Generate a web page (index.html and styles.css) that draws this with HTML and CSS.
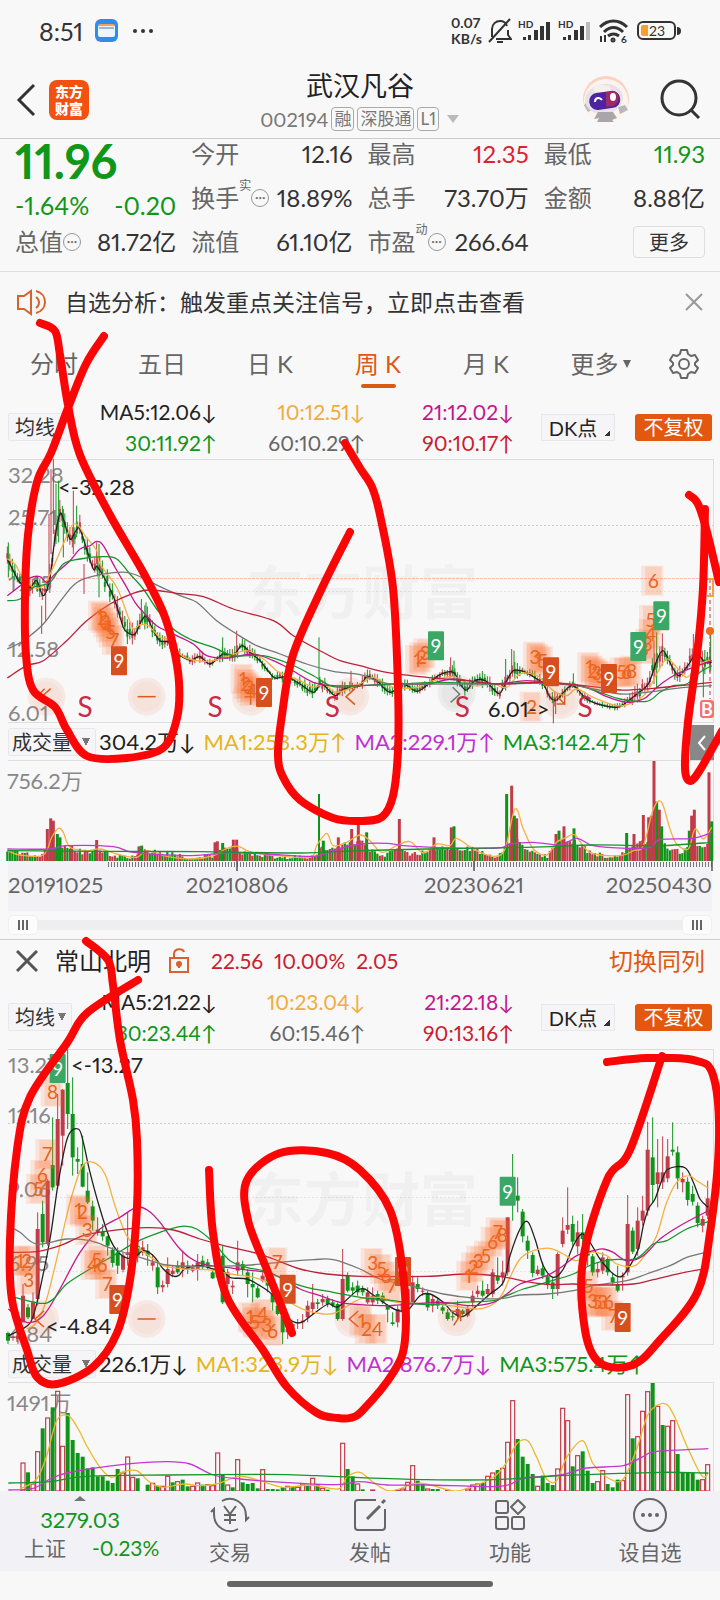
FILE: index.html
```html
<!DOCTYPE html>
<html lang="zh-CN">
<head>
    <meta charset="UTF-8">
    <meta name="viewport" content="width=device-width, initial-scale=1.0">
    <title>武汉凡谷 002194</title>
    <link rel="stylesheet" href="styles.css">
</head>
<body>

<div class="status-bar">
    <span class="clock">8:51</span>
    <svg class="app-dot" width="24" height="24" viewBox="0 0 24 24">
        <rect width="23" height="23" rx="6" fill="#2f8bee"/>
        <rect x="3" y="6" width="17" height="12" rx="2" fill="#eef5fd"/>
        <path d="M3 7q0-2 2-2h13q2 0 2 2z" fill="#f3a253"/>
        <path d="M4 9h15" stroke="#5373a8" stroke-width="1"/>
    </svg>
    <svg width="24" height="24" viewBox="0 0 24 24" fill="#333"><circle cx="4" cy="12" r="2"/><circle cx="12" cy="12" r="2"/><circle cx="20" cy="12" r="2"/></svg>
    <div class="status-right">
        <span class="net-speed">0.07<br>KB/s</span>
        <svg width="24" height="26" viewBox="0 0 24 26" fill="none" stroke="#333" stroke-width="2">
            <path d="M4 19V11c0-5 4-8 8-8 3 0 6 2 7 5M20 12v5l3 4H8M22 1L1 24M9 24h6"/>
        </svg>
        <svg width="34" height="24" viewBox="0 0 34 24" fill="#333">
            <text class="hd" x="0" y="9">HD</text>
            <path d="M5 18h3v3H5zM10 16h3v5h-3zM16 11h4v10h-4zM22 7h4v14h-4zM28 3h4v18h-4z"/>
        </svg>
        <svg width="34" height="24" viewBox="0 0 34 24" fill="#333">
            <text class="hd" x="0" y="9">HD</text>
            <path d="M5 18h3v3H5zM10 16h3v5h-3zM16 11h4v10h-4zM22 7h4v14h-4z"/><path d="M28 3h4v18h-4z" fill="#bbb"/>
        </svg>
        <svg width="32" height="26" viewBox="0 0 32 26" fill="none" stroke="#333" stroke-width="3">
            <path d="M2 9c8-8 19-8 27 0M6 14c6-6 13-6 19 0M10 18c4-3 7-3 11 0"/>
            <path d="M3 24v-6M7 17v7" stroke-width="2"/><circle cx="15" cy="22" r="1" />
            <text class="hd" x="23" y="25" fill="#333" stroke="none">6</text>
        </svg>
        <svg width="46" height="22" viewBox="0 0 46 22">
            <rect x="2" y="2" width="37" height="17" rx="5" fill="none" stroke="#333" stroke-width="2"/>
            <path d="M5 7q0-2 2-2h5v11H7q-2 0-2-2z" fill="#f7a02c"/>
            <path d="M41 7q4 0 4 4t-4 4z" fill="#333"/>
            <text class="battery-text" x="13" y="16">23</text>
        </svg>
    </div>
</div>

<header class="header">
    <div class="header-left">
        <button class="icon-btn" aria-label="返回">
            <svg width="22" height="34" viewBox="0 0 22 34" fill="none" stroke="#333" stroke-width="3"><path d="M18 2L3 17l15 15"/></svg>
        </button>
        <a class="logo" href="#">东方<br>财富</a>
    </div>
    <div class="header-title">
        <h1>武汉凡谷</h1>
        <button class="code">002194 <span class="tag">融</span><span class="tag">深股通</span><span class="tag">L1</span>
            <svg width="14" height="10" viewBox="0 0 14 10" fill="#bbb"><path d="M1 1h12L7 9z"/></svg>
        </button>
    </div>
    <div class="header-right">
        <button class="icon-btn" aria-label="助手">
            <svg width="50" height="50" viewBox="0 0 50 50">
                <circle cx="26" cy="24" r="23" fill="#fbd3c2"/>
                <circle cx="26" cy="26" r="22" fill="#fdf3ef"/>
                <path d="M4 30l6-6 4 10-6 3zM38 32l7-2 3 5-8 4z" fill="#b9b7bb"/>
                <ellipse cx="24" cy="24" rx="19" ry="15" fill="#e6e2e6" transform="rotate(-10 24 24)"/>
                <ellipse cx="22" cy="14" rx="9" ry="4" fill="#f7f0ea"/>
                <path d="M18 37h15l4 6-5 2 2 2H17l2-4-5 1z" fill="#aaa5a8"/>
                <rect x="9" y="17" width="31" height="17" rx="8" fill="#4d23a1" transform="rotate(-8 24 24)"/>
                <path d="M26 17l7-1c7 1 8 12 0 15l-7 1z" fill="#a02a63"/>
                <path d="M15 27c0-5 5-5 7-2" fill="none" stroke="#fff" stroke-width="2"/>
                <ellipse cx="33" cy="22" rx="3" ry="4" fill="#fff"/>
            </svg>
        </button>
        <button class="icon-btn" aria-label="搜索">
            <svg width="42" height="42" viewBox="0 0 42 42" fill="none" stroke="#333" stroke-width="3"><circle cx="19" cy="19" r="17"/><path d="M31 31l8 8"/></svg>
        </button>
    </div>
</header>

<section class="quote">
    <div class="quote-col quote-main">
        <strong class="price">11.96</strong>
        <div class="cell change green"><span>-1.64%</span><span>-0.20</span></div>
        <div class="cell"><span class="lbl">总值<i class="dots">•••</i></span><b>81.72亿</b></div>
    </div>
    <div class="quote-col">
        <div class="cell"><span class="lbl">今开</span><b>12.16</b></div>
        <div class="cell"><span class="lbl">换手<sup>实</sup><i class="dots">•••</i></span><b>18.89%</b></div>
        <div class="cell"><span class="lbl">流值</span><b>61.10亿</b></div>
    </div>
    <div class="quote-col">
        <div class="cell"><span class="lbl">最高</span><b class="red">12.35</b></div>
        <div class="cell"><span class="lbl">总手</span><b>73.70万</b></div>
        <div class="cell"><span class="lbl">市盈<sup>动</sup><i class="dots">•••</i></span><b>266.64</b></div>
    </div>
    <div class="quote-col">
        <div class="cell"><span class="lbl">最低</span><b class="green">11.93</b></div>
        <div class="cell"><span class="lbl">金额</span><b>8.88亿</b></div>
        <div class="cell cell-end"><button class="more-btn">更多</button></div>
    </div>
</section>

<div class="notice">
    <svg width="32" height="28" viewBox="0 0 32 28" fill="none" stroke="#d9622c" stroke-width="2">
        <path d="M2 8h6l7-5v23l-7-5H2zM20 9c4 3 4 8 0 11M20 3c12 3 12 19 0 22"/>
    </svg>
    <a href="#">自选分析：触发重点关注信号，立即点击查看</a>
    <button class="icon-btn" aria-label="关闭">
        <svg width="18" height="18" viewBox="0 0 18 18" stroke="#999" stroke-width="2"><path d="M1 1l16 16M17 1L1 17"/></svg>
    </button>
</div>

<nav class="tabs">
    <button>分时</button>
    <button>五日</button>
    <button>日 K</button>
    <button class="active">周 K</button>
    <button>月 K</button>
    <button class="tab-more">更多<svg width="8" height="8" viewBox="0 0 8 8" fill="#666"><path d="M0 0h8L4 8z"/></svg></button>
    <button class="gear" aria-label="设置">
        <svg width="30" height="30" viewBox="0 0 30 30" fill="none" stroke="#666" stroke-width="2" stroke-linejoin="round">
            <path d="M12 1h6l1 4 3 2 4-1 3 5-3 3v2l3 3-3 5-4-1-3 2-1 4h-6l-1-4-3-2-4 1-3-5 3-3v-2l-3-3 3-5 4 1 3-2z"/><circle cx="15" cy="15" r="5"/>
        </svg>
    </button>
</nav>

<main>
    <section class="stock">
        <div class="ma-row">
            <select class="pick" aria-label="指标"><option>均线</option></select>
            <div class="ma"><span class="c-black">MA5:12.06↓</span><span class="c-green">30:11.92↑</span></div>
            <div class="ma"><span class="c-yellow">10:12.51↓</span><span class="c-gray">60:10.29↑</span></div>
            <div class="ma"><span class="c-pink">21:12.02↓</span><span class="c-red">90:10.17↑</span></div>
            <div class="ma-btns"><button class="dk">DK点</button><button class="adj">不复权</button></div>
        </div>
        <svg class="chart" id="price1" viewBox="0 0 720 264"></svg>
        <div class="vol-row">
            <select class="pick pick-vol" aria-label="副图指标"><option>成交量</option></select>
            <span class="c-black">304.2万↓</span>
            <span class="c-yellow2">MA1:253.3万↑</span>
            <span class="c-purple">MA2:229.1万↑</span>
            <span class="c-green">MA3:142.4万↑</span>
            <button class="side-btn" aria-label="展开"><svg width="10" height="16" viewBox="0 0 10 16" fill="none" stroke="#fff" stroke-width="2"><path d="M8 1L2 8l6 7"/></svg></button>
        </div>
        <svg class="chart" id="vol1" viewBox="0 0 720 101"></svg>
        <div class="dates">
            <span>20191025</span><span>20210806</span><span>20230621</span><span>20250430</span>
        </div>
        <div class="range">
            <input type="range" min="0" max="100" value="0" aria-label="起始">
            <input type="range" min="0" max="100" value="100" aria-label="结束">
        </div>
    </section>

    <section class="stock stock-second">
        <div class="stock-head">
            <button class="icon-btn" aria-label="移除"><svg width="22" height="22" viewBox="0 0 22 22" stroke="#555" stroke-width="3"><path d="M1 1l20 20M21 1L1 21"/></svg></button>
            <h2>常山北明</h2>
            <button class="icon-btn lock" aria-label="锁定">
                <svg width="20" height="26" viewBox="0 0 20 26" fill="none" stroke="#d9622c" stroke-width="2"><path d="M1 10h18v14H1zM5 10V6c0-6 9-6 10-2"/><circle cx="10" cy="16" r="2" fill="#d9622c"/><path d="M10 16v4"/></svg>
            </button>
            <span class="red">22.56</span><span class="red">10.00%</span><span class="red">2.05</span>
            <a href="#" class="switch">切换同列</a>
        </div>
        <div class="ma-row">
            <select class="pick" aria-label="指标"><option>均线</option></select>
            <div class="ma"><span class="c-black">MA5:21.22↓</span><span class="c-green">30:23.44↑</span></div>
            <div class="ma"><span class="c-yellow">10:23.04↓</span><span class="c-gray">60:15.46↑</span></div>
            <div class="ma"><span class="c-pink">21:22.18↓</span><span class="c-red">90:13.16↑</span></div>
            <div class="ma-btns"><button class="dk">DK点</button><button class="adj">不复权</button></div>
        </div>
        <svg class="chart" id="price2" viewBox="0 0 720 296"></svg>
        <div class="vol-row">
            <select class="pick pick-vol" aria-label="副图指标"><option>成交量</option></select>
            <span class="c-black">226.1万↓</span>
            <span class="c-yellow2">MA1:323.9万↓</span>
            <span class="c-purple">MA2:876.7万↓</span>
            <span class="c-green">MA3:575.4万↑</span>
        </div>
        <svg class="chart" id="vol2" viewBox="0 0 720 109"></svg>
    </section>
</main>

<footer class="bottom-nav">
    <a href="#" class="index">
        <svg width="12" height="5" viewBox="0 0 12 5" fill="#777"><path d="M6 0l6 5H0z"/></svg>
        <span class="green">3279.03</span>
        <span class="index-row"><span>上证</span><span class="green">-0.23%</span></span>
    </a>
    <a href="#">
        <svg width="40" height="36" viewBox="0 0 40 36" fill="none" stroke="#666" stroke-width="2">
            <path d="M12 4c10-6 24 1 24 15v4l3-3M28 32C18 38 4 31 4 17v-5l-3 3"/><path d="M14 9l6 8 6-8M20 17v10M14 18h12M14 23h12"/>
        </svg>
        <span>交易</span>
    </a>
    <a href="#">
        <svg width="36" height="36" viewBox="0 0 36 36" fill="none" stroke="#666" stroke-width="2">
            <path d="M24 3H6q-3 0-3 3v24q0 3 3 3h24q3 0 3-3V12"/><path d="M15 22L28 9M30 6l3-3" stroke-width="3"/>
        </svg>
        <span>发帖</span>
    </a>
    <a href="#">
        <svg width="36" height="36" viewBox="0 0 36 36" fill="none" stroke="#666" stroke-width="2">
            <rect x="4" y="4" width="12" height="12" rx="2"/><rect x="4" y="20" width="12" height="12" rx="2"/><rect x="20" y="20" width="12" height="12" rx="2"/><path d="M26 3l7 7-7 7-7-7z" stroke-linejoin="round"/>
        </svg>
        <span>功能</span>
    </a>
    <a href="#">
        <svg width="36" height="36" viewBox="0 0 36 36" fill="none" stroke="#666" stroke-width="2">
            <circle cx="18" cy="18" r="16"/><g fill="#666" stroke="none"><circle cx="11" cy="18" r="2"/><circle cx="18" cy="18" r="2"/><circle cx="25" cy="18" r="2"/></g>
        </svg>
        <span>设自选</span>
    </a>
</footer>
<div class="home-bar"></div>

<svg class="marks" id="marks" viewBox="0 0 720 1600"></svg>

<script src="charts.js"></script>
</body>
</html>
```
FILE: styles.css
```css
* { box-sizing: border-box; }
body {
    position: relative;
    margin: 0;
    background: #f9f8f9;
    color: #333;
    font-family: Lato, "Noto Sans CJK SC", sans-serif;
    font-size: 24px;
    line-height: 30px;
    font-variant-numeric: proportional-nums;
    overflow-x: hidden;
}
button, select, input { font: inherit; color: inherit; margin: 0; }
button { background: none; border: none; padding: 0; cursor: pointer; }
a { color: inherit; text-decoration: none; }
h1, h2 { margin: 0; font-weight: normal; }
svg { display: block; flex: none; }
.icon-btn { display: flex; }

.red, .c-red { color: #c9202e; }
.green, .c-green { color: #109618; }
.c-black { color: #222; }
.c-yellow { color: #f0ac3c; }
.c-yellow2 { color: #e6b422; }
.c-gray { color: #666; }
.c-pink { color: #c4168c; }
.c-purple { color: #c030d0; }

/* 状态栏 */
.status-bar { display: flex; align-items: center; gap: 12px; height: 62px; padding: 0 38px 0 39px; }
.clock { font-size: 25px; }
.status-right { display: flex; align-items: center; gap: 6px; margin-left: auto; }
.net-speed { font-size: 14px; line-height: 16px; font-weight: bold; }
.hd { font-size: 10px; font-weight: bold; }
.battery-text { font-size: 14px; fill: #333; }

/* 标题 */
.header { display: grid; grid-template-columns: 1fr auto 1fr; align-items: center; height: 77px; padding: 0 16px; border-bottom: 1px solid #ccc; }
.header-left { display: flex; align-items: center; gap: 11px; }
.logo { width: 40px; height: 40px; padding-top: 3px; border-radius: 8px; background: #f4500f; color: #fff; font-size: 14px; line-height: 17px; font-weight: 900; text-align: center; }
.header-title { padding-bottom: 3px; text-align: center; }
.header-title h1 { font-size: 27px; line-height: 40px; color: #222; }
.code { display: flex; align-items: center; gap: 3px; height: 26px; color: #777; font-size: 20px; line-height: 22px; }
.tag { padding: 0 2px; border: 1px solid #aaa; border-radius: 4px; font-size: 17px; }
.code svg { margin-left: 4px; }
.header-right { display: flex; align-items: center; justify-content: flex-end; gap: 30px; padding-right: 2px; }

/* 行情 */
.quote { display: grid; grid-template-columns: repeat(4, 1fr); gap: 15px; height: 133px; padding: 0 15px; border-bottom: 1px solid #ddd; }
.quote-col { display: flex; flex-direction: column; }
.cell { display: flex; justify-content: space-between; align-items: center; height: 44px; margin-top: -7px; margin-bottom: 7px; white-space: nowrap; }
.cell b { font-weight: normal; }
.cell .red { color: #e0202e; }
.cell .green { color: #109618; }
.lbl { display: flex; align-items: center; color: #666; }
.lbl sup { align-self: flex-start; font-size: 12px; line-height: 12px; margin-top: -3px; }
.dots { width: 18px; height: 18px; border: 1px solid #999; border-radius: 50%; font-size: 6px; line-height: 16px; font-style: normal; text-align: center; color: #777; }
.price { height: 44px; font-size: 47px; line-height: 45px; color: #109618; }
.change { font-size: 25px; }
.quote-main .change { margin-top: 0; margin-bottom: 0; }
.cell-end { justify-content: flex-end; }
.more-btn { width: 72px; height: 32px; border: 1px solid #ddd; border-radius: 4px; font-size: 20px; line-height: 28px; }

/* 提示 */
.notice { display: flex; align-items: center; height: 60px; padding: 0 17px 0 16px; gap: 17px; font-size: 23px; }
.notice .icon-btn { margin-left: auto; }

/* 周期 */
.tabs { display: grid; grid-template-columns: repeat(6, 108fr) 72fr; height: 63px; color: #666; }
.tabs button { position: relative; display: flex; align-items: center; justify-content: center; gap: 4px; }
.tabs .tab-more { padding-left: 13px; }
.tabs .active { color: #dd5a14; }
.tabs .active::after { content: ""; position: absolute; bottom: 7px; width: 35px; height: 4px; border-radius: 2px; background: #dd5a14; }

/* 均线 */
.ma-row { display: grid; grid-template-columns: 60px repeat(3, 1fr) 198px; align-items: center; height: 64px; padding: 0 8px; font-size: 21px; line-height: 31px; }
.ma { display: flex; flex-direction: column; align-items: flex-end; white-space: nowrap; }
.pick { appearance: none; width: 64px; height: 28px; padding: 0 6px; border: 1px solid #e8e8ec; border-radius: 2px; font-size: 20px; line-height: 24px; color: #333;
    background: #f5f5f7 conic-gradient(from -26deg at 50% 100%, #777 0 52deg, transparent 0) no-repeat right 5px center / 8px 8px; }
.ma-btns { display: flex; justify-content: space-between; padding-left: 27px; font-size: 20px; line-height: 26px; }
.dk { width: 74px; height: 27px; padding-right: 10px; border: 1px solid #e8e8ec; color: #222;
    background: linear-gradient(135deg, transparent 50%, #333 50%) no-repeat right 4px bottom 4px / 6px 6px #f5f5f7; }
.adj { width: 77px; height: 27px; border-radius: 3px; background: #e3570f; color: #fff; }

.chart { width: 100%; height: auto; overflow: visible; }
.chart text { font-size: 22px; }
.chart .num { font-size: 19px; text-anchor: middle; }
.chart .sig { font-size: 28px; fill: #c92a45; text-anchor: middle; }
.chart .buy { font-size: 18px; fill: #fff; font-weight: bold; }
.chart .wm { font-size: 58px; font-weight: bold; fill: #000; fill-opacity: .03; text-anchor: middle; }

.vol-row { position: relative; display: flex; align-items: center; gap: 8px; height: 37px; padding: 0 8px; font-size: 22px; white-space: nowrap; }
.pick-vol { width: 88px; margin-right: -5px; padding: 0 3px; }
.side-btn { position: absolute; right: 6px; top: 2px; width: 24px; height: 35px; display: flex; align-items: center; justify-content: center; background: #888; }

.dates { display: grid; grid-template-columns: 118fr 222fr 252fr 112fr; height: 50px; margin: 0 8px; padding: 9px 0; background: #f2f2f6; color: #666; font-size: 22px; text-align: center; }
.dates span:first-child { text-align: left; }
.dates span:last-child { text-align: right; }
.range { display: grid; align-items: center; height: 28px; margin: 0 8px; background: linear-gradient(#eeeef0, #eeeef0) no-repeat center / 100% 10px; }
.range input { grid-area: 1 / 1; appearance: none; width: 100%; height: 20px; background: none; pointer-events: none; }
.range input::-webkit-slider-thumb { appearance: none; pointer-events: auto; width: 30px; height: 20px; border: 1px solid #f0f0f0; border-radius: 5px;
    background: repeating-linear-gradient(90deg, #666 0 2px, transparent 2px 4px) no-repeat center / 10px 10px #fcfcfc; }

/* 第二只股票 */
.stock-second { border-top: 1px solid #ccc; }
.stock-head { display: flex; align-items: center; gap: 11px; height: 45px; padding: 0 15px 3px 16px; font-size: 22px; }
.stock-head h2 { margin: 0 7px 0 6px; font-size: 24px; color: #222; }
.lock { margin-right: 11px; }
.stock-head .red { font-size: 21px; }
.switch { margin-left: auto; font-size: 24px; color: #dd5a14; }

/* 底部导航 */
.bottom-nav { position: relative; display: grid; grid-template-columns: 160fr repeat(4, 140fr); height: 80px; background: #f2f2f6; color: #666; font-size: 21px; line-height: 28px; }
.bottom-nav a { display: flex; flex-direction: column; align-items: center; gap: 10px; padding-top: 6px; line-height: 18px; }
.bottom-nav .index { gap: 0; padding-top: 5px; font-size: 22px; line-height: 28px; }
.index svg { margin-bottom: 5px; }
.index-row { display: flex; gap: 26px; padding-left: 24px; align-self: flex-start; font-size: 21px; }
.home-bar { width: 37%; height: 6px; margin: 10px auto 13px; border-radius: 3px; background: #666; }

.marks { position: absolute; top: 0; left: 0; width: 100%; height: auto; pointer-events: none; fill: none; stroke: #fb0606; stroke-width: 8; stroke-linecap: round; stroke-linejoin: round; }
```
FILE: charts.js
```js
// 数据按 1/3 像素记录，左半屏与右半屏各一组，右半组的 x 从 1080 开始
const HALF = 1080;
const RED = "#c03c48", GREEN = "#0f9318";
const INK = { black: "#222", yellow: "#f5b041", pink: "#c4168c", green: "#14962a", gray: "#777", red: "#bd2038", purple: "#c437d2" };

function join(left, right) {
    return left.concat(right.map(p => [p[0] + HALF, ...p.slice(1)]));
}

// 平滑曲线
function smooth(p) {
    let d = `M${p[0][0].toFixed(1)} ${p[0][1].toFixed(1)}`;
    for (let i = 0; i < p.length - 1; i++) {
        const a = p[i - 1] || p[i], b = p[i], c = p[i + 1], e = p[i + 2] || c;
        d += `C${(b[0] + (c[0] - a[0]) / 6).toFixed(1)} ${(b[1] + (c[1] - a[1]) / 6).toFixed(1)} ` +
             `${(c[0] - (e[0] - b[0]) / 6).toFixed(1)} ${(c[1] - (e[1] - b[1]) / 6).toFixed(1)} ${c[0].toFixed(1)} ${c[1].toFixed(1)}`;
    }
    return d;
}

function interp(p, x) {
    for (let i = 1; i < p.length; i++) {
        if (x <= p[i][0]) {
            const t = (x - p[i - 1][0]) / (p[i][0] - p[i - 1][0]);
            return p[i - 1][1] + t * (p[i][1] - p[i - 1][1]);
        }
    }
    return p[p.length - 1][1];
}

let seed = 7;
function rnd() {
    seed = (seed * 16807) % 2147483647;
    return seed / 2147483647;
}

function curve(pts, off, color) {
    const p = pts.map(q => [q[0] / 3, q[1] / 3 - off]);
    return `<path d="${smooth(p)}" fill="none" stroke="${color}" stroke-width="1.3"/>`;
}

function bar(x, top, bottom, off, w, color, hollow) {
    const y = top / 3 - off, h = Math.max((bottom - top) / 3, 1);
    return hollow
        ? `<rect x="${x / 3 - w / 2}" y="${y}" width="${w}" height="${h}" fill="none" stroke="${color}" stroke-width="1.2"/>`
        : `<rect x="${x / 3 - w / 2}" y="${y}" width="${w}" height="${h}" fill="${color}"/>`;
}

function frame(h, lines) {
    let s = `<path d="M8 .5H713M713.5 0V${h}M8 ${h - .5}H713" fill="none" stroke="#ddd"/>`;
    lines.forEach((y, i) => s += `<path d="M8 ${y}.5H713" stroke="${i ? "#e4e4e4" : "#ccc"}" stroke-dasharray="2 2"/>`);
    return s;
}

function glow(x, y, n, off) {
    x = x / 3; y = y / 3 - off;
    return `<rect x="${x - 12}" y="${y - 15}" width="22" height="30" fill="#ff6a2a" fill-opacity=".15"/>` +
           `<rect x="${x - 8}" y="${y - 14}" width="16" height="28" fill="#ff6a2a" fill-opacity=".15"/>` +
           `<text class="num" x="${x}" y="${y + 7}" fill="#e5651c">${n}</text>`;
}

function nine(x, y, off, color) {
    x = x / 3; y = y / 3 - off;
    return `<rect x="${x - 8}" y="${y - 15}" width="16" height="29" rx="1" fill="${color}"/>` +
           `<text class="num" x="${x}" y="${y + 7}" fill="#fff">9</text>`;
}

function disc(x, y, off, d, color) {
    x = x / 3; y = y / 3 - off;
    return `<circle cx="${x}" cy="${y}" r="19" fill="${color}" fill-opacity=".09"/>` +
           `<circle cx="${x}" cy="${y}" r="15" fill="${color}" fill-opacity=".05"/>` +
           `<path transform="translate(${x} ${y})" d="${d}" fill="none" stroke="${color}" stroke-width="1.5"/>`;
}

const DASH = "M-9 0H9", CHEV = "M5-8L-4 0l9 8";
const ORANGE = "#dc5a20", TEAL = "#3aa764", BRICK = "#d84f1f";

// ---------- 武汉凡谷 周K ----------
const ma5 = join(
    [[22,315],[40,350],[60,385],[90,400],[110,380],[130,425],[150,370],[165,250],[180,180],[190,195],[210,255],[225,235],[238,222],[255,270],[280,345],[292,338],[320,385],[345,440],[370,520],[385,537],[405,540],[425,500],[440,488],[460,530],[480,560],[505,565],[535,600],[570,618],[600,608],[630,630],[670,600],[700,605],[725,575],[750,595],[780,620],[800,645],[825,672],[860,668],[900,690],[940,715],[965,690],[1005,725],[1030,705]],
    [[0,695],[20,668],[50,680],[90,715],[130,690],[170,712],[205,690],[240,662],[280,655],[300,690],[320,708],[345,680],[375,680],[400,705],[420,718],[440,680],[460,650],[490,652],[520,668],[550,690],[570,730],[590,738],[615,710],[640,695],[680,735],[720,752],[770,760],[800,745],[830,720],[865,690],[890,620],[908,590],[925,615],[940,645],[958,665],[980,640],[1010,600],[1035,625],[1055,625]]);
const amp = join(
    [[22,50],[60,40],[130,45],[150,70],[180,60],[220,60],[260,50],[300,60],[350,55],[420,50],[500,42],[560,24],[700,34],[800,26],[940,36]],
    [[0,30],[200,28],[300,34],[450,40],[500,26],[600,32],[700,18],[780,15],[850,50],[900,75],[940,40],[1000,60],[1055,60]]);
const spikes1 = join(
    [[25,265,370,GREEN],[125,455,540,RED],[137,420,500,RED],[147,180,380,RED],[153,45,300,RED],[160,15,240,RED],[168,90,270,GREEN],[176,80,265,GREEN],[190,165,310,GREEN],[220,110,300,RED],[230,155,250,GREEN],[252,330,420,RED],[290,265,330,RED],[297,270,430,GREEN],[424,435,500,GREEN],[438,445,510,GREEN],[668,550,620,GREEN],[710,530,600,RED],[957,550,700,GREEN],[1053,650,700,RED]],
    [[272,610,670,RED],[282,620,680,GREEN],[437,615,710,GREEN],[455,585,650,RED],[462,590,650,GREEN],[580,740,808,RED],[587,735,780,RED],[640,658,700,GREEN],[882,560,690,RED],[890,535,700,GREEN],[1000,540,640,RED],[1030,640,730,GREEN],[1052,540,650,GREEN]]);

(function () {
    const O = 5;
    let s = frame(264, [66, 132]);
    s += `<text class="wm" x="362" y="155">东方财富</text>`;
    s += `<path d="M8 119.5H713" stroke="#f5bfb2" stroke-dasharray="3 1"/>`;
    [["32.28", 24], ["25.71", 66], ["19.15", 132], ["12.58", 198], ["6.01", 262]].forEach(a => {
        s += `<text x="8" y="${a[1]}" fill="#888">${a[0]}</text>`;
    });
    let body = "";
    for (let x = 22; x < 2136; x += 7.5) {
        const y = interp(ma5, x), a = interp(amp, x);
        const up = interp(ma5, x + 8) < y;
        const c = rnd() < (up ? .7 : .25) ? RED : GREEN;
        const hi = y - a * (.2 + rnd() * .6), lo = y + a * (.1 + rnd() * .6);
        body += bar(x, hi, lo, O, 1, c);
        body += bar(x, hi + (lo - hi) * .4, lo - (lo - hi) * .3, O, 2, c);
    }
    spikes1.forEach(k => body += bar(k[0], k[1], k[2], O, 1, k[3]));
    s += body;
    s += curve(ma5, O, INK.black);
    s += curve(join(
        [[22,315],[45,330],[65,365],[100,400],[130,395],[155,350],[190,270],[215,215],[235,215],[255,245],[290,290],[300,330],[350,400],[385,490],[400,525],[420,512],[445,515],[480,550],[510,560],[545,605],[590,620],[640,620],[690,605],[740,590],[790,615],[830,650],[860,665],[900,680],[940,700],[975,690],[1010,715]],
        [[0,690],[40,670],[100,700],[170,700],[220,680],[280,668],[340,695],[400,690],[440,700],[480,660],[530,665],[580,710],[620,725],[650,705],[700,730],[770,755],[820,745],[860,715],[890,660],[920,615],[950,640],[980,670],[1010,640],[1030,625],[1055,618]]), O, INK.yellow);
    s += curve(join(
        [[22,425],[55,400],[90,372],[120,368],[140,385],[165,360],[210,320],[240,285],[270,275],[290,262],[310,275],[345,340],[380,400],[405,445],[430,475],[470,515],[530,545],[580,570],[620,605],[680,612],[760,600],[820,620],[870,645],[940,685],[1000,695]],
        [[0,695],[100,690],[200,690],[280,675],[400,690],[500,680],[600,690],[680,700],[740,728],[800,745],[850,735],[880,710],[910,685],[950,660],[1000,640],[1055,620]]), O, INK.pink);
    s += curve(join(
        [[22,440],[60,435],[100,400],[150,385],[190,330],[240,315],[310,308],[350,315],[390,360],[430,405],[470,465],[520,525],[580,560],[640,580],[700,605],[790,605],[870,630],[940,665],[1000,698]],
        [[0,695],[120,690],[240,685],[400,690],[520,685],[640,692],[720,715],[780,735],[860,742],[900,715],[940,695],[980,690],[1020,655],[1055,635]]), O, INK.green);
    s += curve(join(
        [[22,585],[70,560],[130,510],[190,430],[240,380],[340,356],[400,360],[480,398],[540,425],[590,445],[650,500],[710,540],[770,575],[840,600],[920,630],[1000,652]],
        [[0,662],[80,688],[200,690],[400,690],[600,688],[700,705],[780,720],[860,715],[950,703],[1055,695]]), O, INK.gray);
    s += curve(join(
        [[22,672],[80,635],[130,620],[200,560],[260,500],[330,450],[400,418],[450,408],[530,418],[610,428],[700,465],[820,500],[880,545],[960,590],[1020,620]],
        [[0,635],[80,655],[200,670],[320,680],[420,690],[560,685],[700,698],[780,708],[880,703],[960,695],[1055,685]]), O, INK.red);
    s += disc(140, 728, O, "M4-8L-5 0l9 8M-2-8L-10 0", ORANGE) + disc(440, 728, O, DASH, ORANGE) + disc(752, 728, O, "M-6 0H2M0-8V8", ORANGE);
    s += disc(1050, 728, O, CHEV, ORANGE) + disc(HALF + 290, 718, O, "M-4-6l7 7-9 8", "#777") + disc(HALF + 602, 738, O, "M-4-4l8 8v-8M4 4h-8", ORANGE);
    join([[300,485,1],[308,492,2],[316,505,3],[324,520,4],[332,535,5],[342,558,7],[728,675,1],[737,690,2],[746,700,3],[756,710,4]],
         [[172,618,1],[184,610,2],[196,598,3],[525,608,3],[535,614,1],[548,622,5],[515,758,2],[688,640,1],[698,650,2],[710,658,3],[722,665,5],[785,655,5],[800,655,6],[815,650,8],[850,585,8],[862,570,3],[872,540,4],[873,498,5],[880,380,6]])
        .forEach(b => s += glow(b[0], b[1], b[2], O));
    s += nine(357, 622, O, BRICK) + nine(792, 717, O, BRICK) + nine(HALF + 573, 655, O, BRICK) + nine(HALF + 747, 675, O, BRICK);
    s += nine(HALF + 228, 577, O, TEAL) + nine(HALF + 835, 579, O, TEAL) + nine(HALF + 904, 487, O, TEAL);
    [255, 645, 997, HALF + 307, HALF + 675].forEach(x => s += `<text class="sig" x="${x / 3}" y="258">S</text>`);
    s += `<path d="M710 120V240" stroke="${RED}" stroke-dasharray="4 3"/><path d="M706 120h7v17h-6" fill="none" stroke="#f0a53c" stroke-width="2"/><circle cx="710" cy="172" r="4" fill="#f06a1c"/>`;
    s += `<rect x="700" y="241" width="14" height="18" rx="3" fill="#f4726e"/><text class="buy" x="701" y="257">B</text>`;
    s += `<text x="58" y="36" fill="#222">&lt;-32.28</text><text x="488" y="258" fill="#222">6.01-&gt;</text>`;
    document.getElementById("price1").innerHTML = s;
})();

(function () {
    const O = 11, base = 336;
    let s = `<path d="M8 .5H713M713.5 0V101" fill="none" stroke="#ddd"/><text x="7" y="29" fill="#888">756.2万</text>`;
    const env = join(
        [[22,302],[60,315],[130,315],[145,290],[200,295],[260,310],[300,305],[350,318],[400,322],[425,305],[500,310],[560,325],[640,318],[690,295],[740,312],[850,322],[940,325],[960,300],[1000,290],[1050,280]],
        [[0,275],[30,300],[70,325],[110,295],[160,315],[210,300],[290,295],[340,300],[400,322],[430,305],[470,260],[500,300],[560,320],[600,275],[650,280],[700,315],[780,322],[810,295],[850,275],[910,280],[940,305],[970,305],[1000,270],[1030,300],[1055,280]]);
    for (let x = 22; x < 2136; x += 7.5) {
        const top = interp(env, x) + (rnd() - .4) * 16;
        s += bar(x, Math.min(top, 330), base, O, 2.2, rnd() < .5 ? RED : GREEN);
    }
    join([[142,240,RED],[152,208,RED],[160,215,RED],[172,255,GREEN],[180,265,GREEN],[215,290,RED],[290,273,RED],[417,292,RED],[425,290,GREEN],[645,280,RED],[652,277,RED],[668,282,GREEN],[700,272,RED],[710,272,RED],[957,135,GREEN],[970,275,GREEN],[1015,265,RED],[1055,240,RED],[1075,220,RED]],
         [[20,250,GREEN],[118,210,RED],[222,265,RED],[274,235,RED],[282,232,GREEN],[440,135,GREEN],[455,110,RED],[463,200,GREEN],[470,208,RED],[588,255,RED],[597,245,GREEN],[612,232,RED],[642,238,GREEN],[800,252,GREEN],[822,255,RED],[850,198,RED],[866,205,RED],[874,200,RED],[882,36,RED],[890,158,GREEN],[898,182,RED],[905,232,GREEN],[988,245,GREEN],[995,200,RED],[1003,182,RED],[1047,70,RED],[1055,217,GREEN]])
        .forEach(b => s += bar(b[0], b[1], base, O, b[0] === 957 ? 2 : 3, b[2]));
    s += curve(join(
        [[22,305],[60,318],[130,318],[155,265],[175,238],[190,250],[210,295],[260,305],[300,300],[350,315],[410,325],[440,305],[500,322],[580,330],[640,320],[680,298],[715,292],[750,308],[830,320],[930,325],[950,290],[980,253],[1000,290],[1040,280]],
        [[0,258],[30,275],[65,310],[110,290],[150,278],[190,312],[230,285],[270,290],[290,268],[340,300],[400,322],[435,300],[465,180],[490,240],[520,300],[560,318],[590,280],[620,265],[645,258],[690,310],[780,320],[820,305],[850,290],[880,180],[905,160],[930,240],[950,285],[985,300],[1005,240],[1030,270],[1055,235]]), O, INK.yellow);
    s += curve(join([[22,300],[150,300],[200,290],[340,293],[400,310],[560,320],[680,312],[800,315],[940,322],[1000,305]],
        [[0,285],[80,283],[160,292],[400,298],[450,285],[520,280],[600,288],[650,268],[700,290],[800,298],[870,295],[900,272],[1000,268],[1055,250]]), O, INK.purple);
    s += curve(join([[22,305],[300,307],[600,308],[900,312]], [[0,305],[200,300],[500,295],[700,288],[900,290],[1055,280]]), O, INK.green);
    // 刻度
    s += `<path d="M108 104.5H713" stroke="#777" stroke-width="5" stroke-dasharray="1 2"/><path d="M237 101v10M474 101v10M712 101v10" stroke="#555" stroke-width="1.5"/>`;
    document.getElementById("vol1").innerHTML = s;
})();

// ---------- 常山北明 周K ----------
// x, 最高, 最低, 实体上, 实体下, 颜色
const R = RED, G = GREEN;
const candles2 = join(
    [[24,878,915,882,905,G],[39,885,905,893,897,R],[54,880,915,890,900,R],[69,735,850,770,850,R],[84,795,840,805,835,G],[99,760,840,790,840,R],[113,520,800,570,780,R],[128,485,625,525,610,G],[143,420,620,425,615,R],[158,235,455,378,445,G],[173,165,450,240,440,R],[188,150,380,152,290,R],[203,30,270,132,225,G],[218,115,410,225,355,G],[233,325,405,360,368,G],[248,290,445,375,443,G],[263,400,495,455,490,G],[278,485,575,502,545,G],[293,535,590,572,580,G],[308,555,605,578,592,G],[323,590,650,592,620,G],[338,625,685,632,672,G],[353,625,705,640,680,G],[369,640,700,650,692,R],[383,520,680,640,648,R],[398,610,680,630,660,R],[413,590,670,620,650,G],[428,605,650,625,640,R],[443,615,680,635,650,G],[458,645,695,670,680,R],[473,665,765,685,745,G],[488,725,760,738,745,R],[503,655,745,690,735,R],[518,680,715,695,705,R],[533,665,705,680,700,G],[548,635,715,670,690,R],[563,665,705,680,690,G],[578,675,700,685,695,R],[593,645,725,670,690,R],[608,650,690,665,685,G],[623,660,690,670,685,G],[638,695,720,700,718,G],[653,680,720,690,715,R],[668,620,795,650,790,G],[683,690,755,700,735,R],[698,725,765,740,745,R],[713,605,710,670,695,R],[728,665,710,675,690,G],[743,690,775,700,735,G],[758,700,790,735,745,G],[773,740,778,748,775,G],[788,700,730,710,725,R],[803,715,760,720,740,G],[818,750,815,765,790,G],[833,790,830,800,825,G],[848,825,915,830,880,G],[863,860,900,870,880,R],[878,850,880,855,870,R],[893,840,870,850,853,R],[908,825,870,845,850,R],[923,785,850,800,835,R],[938,735,825,790,810,R],[953,780,810,790,795,G],[968,765,800,780,790,R],[983,770,805,780,795,G],[998,780,805,790,800,G],[1013,790,845,795,840,G],[1028,630,845,720,840,R],[1043,700,760,710,755,G],[1058,730,765,745,755,G],[1073,725,770,740,760,G]],
    [[8,740,770,748,760,G],[23,745,795,760,790,R],[38,745,800,770,790,R],[53,755,795,765,785,G],[68,760,795,770,790,G],[83,795,850,800,812,G],[98,820,860,850,855,G],[113,800,865,810,850,R],[128,780,840,790,820,R],[143,740,800,750,790,R],[158,710,790,730,790,R],[173,715,760,735,750,G],[188,745,770,755,758,R],[203,755,815,765,805,G],[218,770,820,780,800,R],[233,775,810,785,800,G],[248,795,825,805,815,G],[263,810,845,820,840,G],[278,820,845,832,835,G],[293,785,840,810,830,R],[308,810,830,815,825,G],[323,800,835,810,830,R],[338,755,805,770,790,R],[353,740,775,755,765,R],[368,725,775,755,770,G],[383,735,775,750,765,R],[398,690,775,700,765,R],[413,655,735,710,725,G],[428,665,740,700,715,R],[443,535,710,535,700,R],[458,345,545,470,485,G],[473,415,520,470,485,G],[488,510,610,518,592,G],[503,590,660,605,635,G],[518,640,715,648,702,G],[533,680,710,692,705,R],[548,670,720,688,710,G],[563,705,750,712,735,G],[578,715,780,730,750,G],[593,640,770,645,750,R],[608,535,625,575,615,R],[623,445,585,558,572,R],[638,530,620,555,608,G],[653,545,645,580,622,R],[668,525,640,580,600,G],[683,600,680,620,650,G],[698,645,710,652,700,G],[713,670,715,690,700,R],[728,640,705,655,695,R],[743,655,710,660,700,G],[758,700,740,715,730,G],[773,680,760,735,755,G],[788,700,755,710,715,R],[803,468,710,555,700,R],[818,565,645,575,638,G],[833,505,650,545,630,R],[848,470,560,515,545,R],[863,248,530,332,515,R],[878,235,490,355,438,G],[893,300,505,400,435,R],[908,292,450,400,430,R],[923,300,430,352,418,R],[938,250,350,332,338,G],[953,322,450,340,418,G],[968,400,460,420,430,R],[983,415,500,428,483,G],[998,440,500,465,488,G],[1013,490,565,500,552,G],[1028,530,580,540,560,R],[1043,425,540,478,530,R]]);

(function () {
    const O = 10;
    let s = frame(296, [74, 148, 222]);
    s += `<text class="wm" x="362" y="172">东方财富</text>`;
    [["13.27", 24], ["11.16", 74], ["9.06", 148], ["6.95", 222], ["4.84", 293]].forEach(a => {
        s += `<text x="8" y="${a[1]}" fill="#888">${a[0]}</text>`;
    });
    candles2.forEach(k => s += bar(k[0], k[1], k[2], O, 1, k[5]) + bar(k[0], k[3], k[4], O, 4, k[5]));
    s += curve(join(
        [[25,890],[80,862],[100,830],[120,750],[150,600],[175,430],[203,295],[235,270],[250,310],[270,400],[300,510],[330,600],[355,640],[385,658],[410,650],[430,635],[460,650],[490,690],[515,710],[535,710],[555,690],[600,680],[640,690],[665,690],[690,715],[740,720],[780,740],[820,770],[850,820],[880,848],[905,850],[940,825],[985,795],[1015,803]],
        [[0,750],[40,768],[85,800],[115,815],[145,812],[180,770],[210,765],[250,790],[280,822],[310,832],[350,800],[390,765],[430,730],[450,650],[480,570],[503,548],[525,600],[550,680],[580,715],[610,690],[640,620],[665,585],[690,610],[720,660],[760,705],[785,712],[810,680],[835,630],[850,560],[865,510],[885,480],[905,425],[925,390],[975,386],[1000,430],[1020,480],[1045,505]]), O, INK.black);
    s += curve(join(
        [[80,870],[110,850],[140,780],[175,640],[210,490],[245,385],[280,370],[315,405],[345,500],[380,590],[420,630],[460,660],[490,680],[550,690],[620,692],[690,705],[760,715],[810,735],[870,790],[920,815],[970,825],[1010,820]],
        [[0,780],[60,775],[110,790],[200,795],[270,800],[350,810],[400,795],[430,760],[450,715],[480,660],[520,635],[570,628],[610,645],[650,665],[690,640],[740,650],[770,675],[825,680],[860,640],[890,590],[920,490],[950,430],[985,410],[1010,425],[1045,447]]), O, INK.yellow);
    s += curve(join(
        [[25,810],[80,850],[130,830],[180,750],[240,640],[300,570],[360,535],[410,505],[445,515],[480,550],[540,630],[600,672],[700,688],[800,700],[850,720],[900,750],[960,770],[1020,790]],
        [[0,797],[80,800],[150,795],[250,790],[330,800],[400,790],[440,765],[480,735],[560,710],[610,680],[650,650],[700,635],[730,630],[760,640],[800,665],[850,650],[900,600],[960,560],[1045,515]]), O, INK.pink);
    s += curve(join(
        [[25,770],[120,793],[160,780],[200,735],[270,690],[340,650],[410,608],[480,580],[545,562],[590,570],[640,610],[690,665],[740,685],[800,698],[860,725],[920,745],[1000,760]],
        [[0,775],[100,785],[200,797],[300,790],[400,785],[440,770],[490,750],[560,730],[640,705],[700,675],[760,662],[830,658],[880,615],[920,605],[980,570],[1045,548]]), O, INK.green);
    s += curve(join(
        [[25,560],[60,580],[110,615],[200,600],[270,605],[340,630],[420,655],[500,678],[600,682],[720,680],[840,670],[940,662],[1000,662]],
        [[0,690],[60,720],[150,740],[250,765],[350,778],[430,778],[480,768],[560,765],[640,755],[700,740],[800,725],[860,705],[930,680],[980,655],[1045,638]]), O, INK.gray);
    s += curve(join(
        [[25,640],[110,638],[180,620],[250,590],[320,577],[440,566],[520,573],[600,600],[680,622],[760,640],[820,660],[900,690],[980,705]],
        [[0,712],[200,712],[320,705],[420,712],[500,728],[570,737],[640,735],[720,738],[820,735],[880,722],[960,703],[1045,688]]), O, INK.red);
    s += disc(120, 840, O, "M4-8L-5 0l9 8", ORANGE) + disc(440, 840, O, DASH, ORANGE) + disc(770, 850, O, DASH, ORANGE);
    s += disc(1060, 840, O, CHEV, ORANGE) + disc(HALF + 290, 835, O, "M6-6L-3 8M-6-6h10v10", ORANGE);
    join([[60,665,1],[80,665,2],[86,722,3],[115,450,5],[127,408,6],[142,345,7],[158,158,8],[235,512,1],[247,518,2],[262,573,3],[278,678,4],[290,663,5],[306,678,6],[322,735,7],[832,670,7],[750,835,1],[765,850,5],[788,825,4],[800,858,3],[818,875,6]],
         [[38,672,3],[65,690,5],[78,712,6],[95,742,7],[5,845,1],[20,870,2],[52,870,4],[325,710,1],[340,685,2],[355,665,3],[378,650,5],[398,608,6],[413,580,7],[427,588,8],[685,740,5],[698,785,3],[712,790,5],[728,788,3],[745,788,6],[760,830,7]])
        .forEach(b => s += glow(b[0], b[1], b[2], O));
    s += nine(173, 90, O, TEAL) + nine(HALF + 443, 458, O, TEAL);
    s += nine(352, 783, O, BRICK) + nine(863, 752, O, BRICK) + nine(HALF + 129, 699, O, BRICK) + nine(HALF + 788, 837, O, BRICK);
    s += `<text x="71" y="24" fill="#222">&lt;-13.27</text><text x="46" y="285" fill="#222">&lt;-4.84</text>`;
    document.getElementById("price2").innerHTML = s;
})();

(function () {
    const O = 13, base = 366;
    let s = `<path d="M8 .5H713M713.5 0V109" fill="none" stroke="#ddd"/><text x="7" y="29" fill="#888">1491万</text>`;
    join([[69,282,R],[84,310,G],[99,345,R],[113,248,R],[128,178,G],[143,147,R],[158,115,G],[173,67,R],[188,232,R],[203,132,G],[218,213,G],[233,252,G],[248,263,G],[263,298,G],[278,295,G],[293,322,G],[308,322,G],[323,335,G],[338,342,G],[353,300,G],[368,312,R],[383,264,R],[398,325,R],[413,328,G],[443,347,G],[458,343,R],[473,350,G],[488,352,R],[503,322,R],[518,340,G],[533,338,R],[548,332,G],[563,352,G],[578,352,R],[593,342,R],[608,347,G],[623,347,R],[638,350,R],[653,252,R],[668,318,G],[683,348,R],[698,355,G],[713,272,R],[728,340,G],[743,345,G],[758,342,G],[773,358,G],[788,302,R],[803,360,G],[818,360,G],[833,361,G],[848,355,G],[863,352,R],[878,352,G],[893,355,R],[908,345,R],[923,350,G],[938,328,R],[953,345,G],[968,358,R],[983,362,G],[1028,223,R],[1043,300,G],[1058,322,G],[1073,345,R]],
         [[8,361,G],[38,363,R],[113,364,R],[128,360,R],[143,340,R],[158,290,R],[173,335,G],[188,345,G],[203,360,R],[218,360,G],[233,360,G],[263,364,R],[323,360,R],[338,348,R],[353,345,R],[368,342,G],[383,322,R],[398,312,R],[413,303,G],[428,298,R],[443,220,R],[458,95,R],[473,210,G],[488,263,G],[503,285,G],[518,315,G],[533,352,R],[548,320,G],[563,342,G],[578,348,G],[593,300,R],[608,118,R],[623,155,R],[638,292,G],[653,260,R],[668,247,G],[683,305,G],[698,342,G],[713,338,R],[728,305,R],[743,345,G],[758,355,G],[773,332,G],[788,335,R],[803,77,R],[818,208,G],[833,203,R],[848,127,R],[863,68,R],[878,42,G],[893,112,R],[908,168,G],[923,172,R],[938,155,R],[953,255,G],[968,310,G],[983,312,G],[998,312,G],[1013,332,G],[1028,332,R],[1043,287,R]])
        .forEach(b => s += bar(b[0], b[1], base, O, 4, b[2], b[2] === R));
    s += curve(join(
        [[60,360],[110,330],[140,260],[170,155],[205,140],[235,180],[260,230],[300,295],[335,325],[370,308],[410,305],[450,340],[490,355],[550,345],[600,350],[650,345],[720,322],[780,335],[850,355],[930,348],[1015,360],[1040,325]],
        [[0,310],[40,340],[90,366],[160,345],[200,345],[280,366],[330,355],[400,325],[440,280],[470,225],[503,215],[530,265],[560,330],[590,335],[620,265],[668,215],[700,285],[750,330],[790,330],[830,240],[865,135],[910,103],[940,135],[980,230],[1025,320],[1045,312]]), O, "#e8b92c");
    s += curve(join([[25,363],[100,358],[150,330],[200,312],[300,295],[400,283],[500,278],[570,285],[640,318],[720,330],[850,340],[1010,347]],
        [[0,338],[80,348],[200,348],[420,352],[490,328],[600,318],[680,297],[790,290],[850,262],[890,247],[1045,239]]), O, INK.purple);
    s += curve(join([[25,342],[150,338],[260,322],[500,318],[800,316],[950,320]], [[0,326],[200,332],[400,332],[600,320],[700,316],[900,310],[1045,312]]), O, INK.green);
    document.getElementById("vol2").innerHTML = s;
})();

// 手绘圈注
const strokes = [
    [[40,323],[55,331],[60,355],[68,405],[80,455],[110,515],[143,572],[163,612],[173,645],[179,682],[177,718],[163,748],[127,758],[87,756],[67,730],[55,707],[33,690],[26,655],[25,598],[28,535],[37,482],[51,453],[68,408],[86,364],[104,336]],
    [[350,532],[322,588],[293,655],[282,715],[278,755],[283,777],[300,800],[333,818],[360,821],[382,817],[393,796],[398,750],[398,688],[393,588],[380,515],[372,487],[360,468],[345,443]],
    [[689,495],[698,504],[707,532],[719,582]],
    [[705,509],[703,588],[697,655],[688,722],[685,768],[690,781],[700,770],[722,731]],
    [[86,941],[108,960],[113,985],[120,1040],[133,1100],[137,1140],[137,1207],[130,1280],[117,1333],[93,1367],[57,1384],[37,1377],[27,1350],[12,1300],[10,1240],[17,1150],[30,1097],[67,1043],[87,1013],[138,980]],
    [[209,1170],[213,1233],[227,1297],[263,1350],[287,1387],[317,1413],[338,1418],[350,1418],[362,1411],[393,1373],[405,1340],[403,1273],[390,1210],[360,1170],[327,1153],[280,1153],[247,1180],[248,1220],[267,1270],[292,1333]],
    [[607,1062],[647,1058],[693,1060],[713,1075],[719,1140],[710,1233],[697,1293],[660,1340],[633,1365],[600,1363],[585,1330],[583,1260],[607,1180],[630,1150],[662,1056]]
];
document.getElementById("marks").innerHTML = strokes.map(p => `<path d="${smooth(p)}"/>`).join("");
```
